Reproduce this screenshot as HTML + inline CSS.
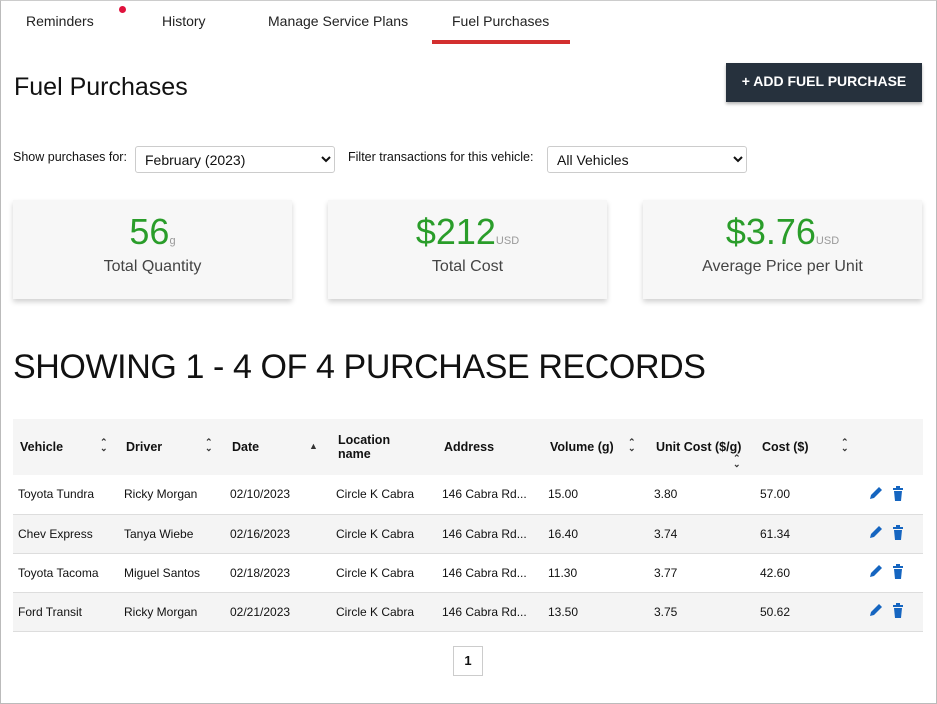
<!DOCTYPE html>
<html><head><meta charset="utf-8"><style>
*{box-sizing:border-box;margin:0;padding:0}
body{width:937px;height:704px;overflow:hidden;background:#fff;font-family:"Liberation Sans",sans-serif;color:#111;position:relative}
.frame{position:absolute;left:0;top:0;width:937px;height:704px;border:1px solid #bbb;border-top:1px solid #ccc;pointer-events:none}
.abs{position:absolute}
.tab{position:absolute;top:13px;font-size:14px;color:#222}
.card{position:absolute;top:200px;width:279px;height:99px;background:#f7f7f7;box-shadow:0 3px 5px rgba(0,0,0,.18);text-align:center}
.big{color:#2a9d2a;font-size:36px;margin-top:11px;height:40px}
.big small{font-size:11px;color:#999}
.lbl{font-size:16px;color:#444;margin-top:7px}
select{position:absolute;top:146px;height:27px;font-family:"Liberation Sans",sans-serif;font-size:14px;border:1px solid #ccc;border-radius:3px;background:#fff;padding-left:5px;color:#111}
table{position:absolute;left:13px;top:419px;width:910px;border-collapse:collapse;font-size:12px}
th{background:#f5f5f5;height:56px;text-align:left;font-weight:bold;font-size:12.5px;padding-left:7px;vertical-align:middle;position:relative}
td{height:39px;padding-left:5px;border-bottom:1px solid #ddd}
tr.g td{background:#f4f4f4}
.s{position:absolute;top:20px;color:#333;font-size:9px;line-height:6px}
</style></head><body>
<div class="tab" style="left:26px">Reminders</div>
<div class="abs" style="left:119px;top:6px;width:7px;height:7px;border-radius:50%;background:#e0123d"></div>
<div class="tab" style="left:162px">History</div>
<div class="tab" style="left:268px">Manage Service Plans</div>
<div class="tab" style="left:452px">Fuel Purchases</div>
<div class="abs" style="left:432px;top:40px;width:138px;height:4px;background:#d32f2f"></div>
<div class="abs" style="left:14px;top:73px;font-size:25px">Fuel Purchases</div>
<div class="abs" style="left:726px;top:63px;width:196px;height:39px;background:#26313d;color:#fff;font-weight:bold;font-size:14px;text-align:center;line-height:37px;box-shadow:0 2px 3px rgba(0,0,0,.3)">+ ADD FUEL PURCHASE</div>
<div class="abs" style="left:13px;top:150px;font-size:12.5px">Show purchases for:</div>
<select style="left:135px;width:200px"><option>February (2023)</option></select>
<div class="abs" style="left:348px;top:150px;font-size:12.5px">Filter transactions for this vehicle:</div>
<select style="left:547px;width:200px"><option>All Vehicles</option></select>
<div class="card" style="left:13px"><div class="big">56<small>g</small></div><div class="lbl">Total Quantity</div></div>
<div class="card" style="left:328px"><div class="big">$212<small>USD</small></div><div class="lbl">Total Cost</div></div>
<div class="card" style="left:643px"><div class="big">$3.76<small>USD</small></div><div class="lbl">Average Price per Unit</div></div>
<div class="abs" style="left:13px;top:348px;font-size:34px;letter-spacing:-0.4px">SHOWING 1 - 4 OF 4 PURCHASE RECORDS</div>
<table>
<tr><th style="width:106px">Vehicle<span class="s" style="left:87px">⌃<br>⌄</span></th><th style="width:106px">Driver<span class="s" style="left:86px">⌃<br>⌄</span></th><th style="width:106px">Date<span class="s" style="left:84px;top:24px">▲</span></th><th style="width:106px">Location<br>name</th><th style="width:106px">Address</th><th style="width:106px">Volume (g)<span class="s" style="left:85px">⌃<br>⌄</span></th><th style="width:106px">Unit Cost ($/g)<br><span class="s" style="left:84px;top:36px">⌃<br>⌄</span></th><th style="width:106px">Cost ($)<span class="s" style="left:86px">⌃<br>⌄</span></th><th></th></tr>
<tr><td>Toyota Tundra</td><td>Ricky Morgan</td><td>02/10/2023</td><td>Circle K Cabra</td><td>146 Cabra Rd...</td><td>15.00</td><td>3.80</td><td>57.00</td><td><svg width="42" height="18"><path d="M4 15 L5 11 L13 3 L16 6 L8 14 Z" fill="#1565c0"/><path d="M27 4h10v2H27zM30 2h4v2h-4zM28 7h8l-1 10h-6z" fill="#1565c0"/></svg></td></tr>
<tr class="g"><td>Chev Express</td><td>Tanya Wiebe</td><td>02/16/2023</td><td>Circle K Cabra</td><td>146 Cabra Rd...</td><td>16.40</td><td>3.74</td><td>61.34</td><td><svg width="42" height="18"><path d="M4 15 L5 11 L13 3 L16 6 L8 14 Z" fill="#1565c0"/><path d="M27 4h10v2H27zM30 2h4v2h-4zM28 7h8l-1 10h-6z" fill="#1565c0"/></svg></td></tr>
<tr><td>Toyota Tacoma</td><td>Miguel Santos</td><td>02/18/2023</td><td>Circle K Cabra</td><td>146 Cabra Rd...</td><td>11.30</td><td>3.77</td><td>42.60</td><td><svg width="42" height="18"><path d="M4 15 L5 11 L13 3 L16 6 L8 14 Z" fill="#1565c0"/><path d="M27 4h10v2H27zM30 2h4v2h-4zM28 7h8l-1 10h-6z" fill="#1565c0"/></svg></td></tr>
<tr class="g"><td>Ford Transit</td><td>Ricky Morgan</td><td>02/21/2023</td><td>Circle K Cabra</td><td>146 Cabra Rd...</td><td>13.50</td><td>3.75</td><td>50.62</td><td><svg width="42" height="18"><path d="M4 15 L5 11 L13 3 L16 6 L8 14 Z" fill="#1565c0"/><path d="M27 4h10v2H27zM30 2h4v2h-4zM28 7h8l-1 10h-6z" fill="#1565c0"/></svg></td></tr>
</table>
<div class="abs" style="left:453px;top:646px;width:30px;height:30px;border:1px solid #ccc;text-align:center;line-height:28px;font-size:13px;font-weight:bold">1</div>
<div class="frame"></div>
</body></html>
